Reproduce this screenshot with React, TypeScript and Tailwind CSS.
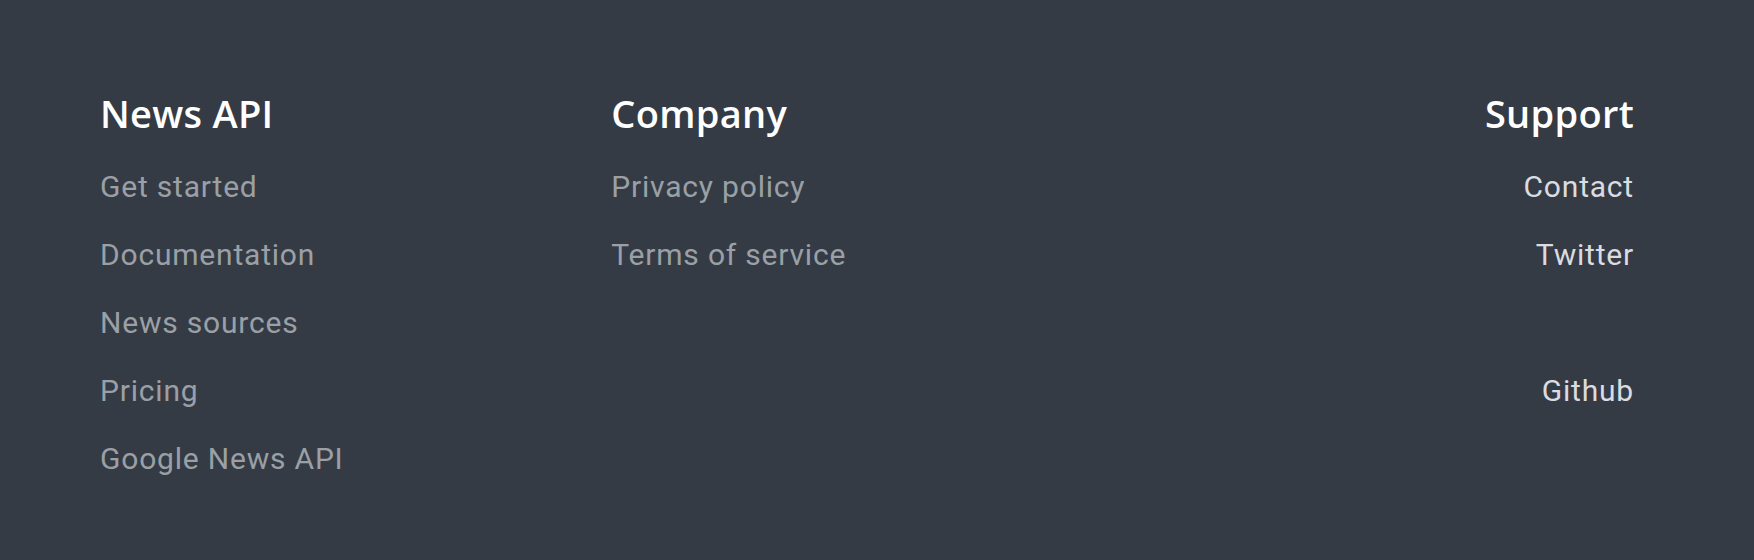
import React from "react";

interface FooterColumnProps {
  title: string;
  links: string[];
  align?: "left" | "right";
  linkClass: string;
}

const FooterColumn: React.FC<FooterColumnProps> = ({
  title,
  links,
  align = "left",
  linkClass,
}) => {
  return (
    <div className={align === "right" ? "flex flex-col text-right" : "flex flex-col"}>
      <h3 className="font-['Open_Sans',sans-serif] text-[38px] leading-[48px] font-semibold tracking-[0.3px] text-white mb-[16px]">
        {title}
      </h3>
      <ul className="flex flex-col">
        {links.map((link, i) => (
          <li key={i} className="h-[68px] leading-[68px]">
            {link ? (
              <a href="#" className={`text-[30px] tracking-[0.8px] ${linkClass}`}>
                {link}
              </a>
            ) : null}
          </li>
        ))}
      </ul>
    </div>
  );
};

const App: React.FC = () => {
  return (
    <footer className="w-full h-[560px] bg-[#353b45] font-['Roboto',sans-serif]">
      <div className="grid grid-cols-3 pl-[100px] pr-[120px] pt-[89px]">
        <FooterColumn
          title="News API"
          links={["Get started", "Documentation", "News sources", "Pricing", "Google News API"]}
          linkClass="text-[#9aa0a6]"
        />
        <FooterColumn
          title="Company"
          links={["Privacy policy", "Terms of service"]}
          linkClass="text-[#9aa0a6]"
        />
        <FooterColumn
          title="Support"
          links={["Contact", "Twitter", "", "Github"]}
          align="right"
          linkClass="text-[#dadce0]"
        />
      </div>
    </footer>
  );
};

export default App;
